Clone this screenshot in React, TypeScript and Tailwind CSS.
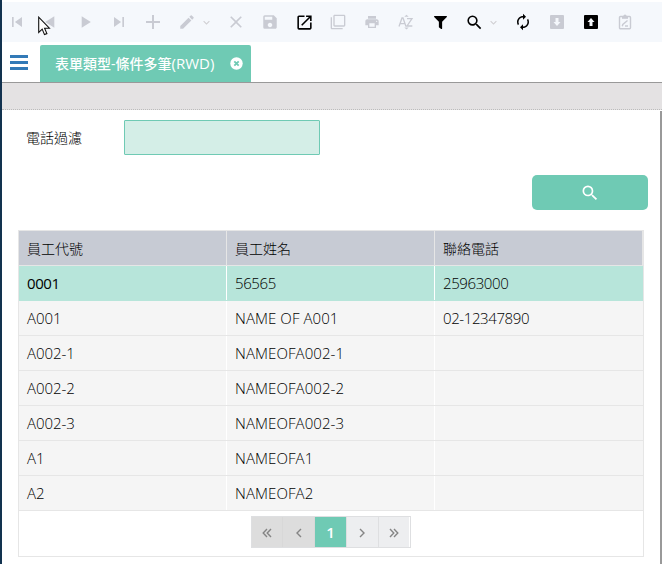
import React from "react";
import {
  MdSkipPrevious,
  MdSkipNext,
  MdPlayArrow,
  MdAdd,
  MdEdit,
  MdClose,
  MdSave,
  MdOpenInNew,
  MdFilterNone,
  MdPrint,
  MdSearch,
  MdAutorenew,
  MdExpandMore,
} from "react-icons/md";
import { FaFilter } from "react-icons/fa";

function Cell({ children, dark }: { children: React.ReactNode; dark?: boolean }) {
  return (
    <span className={"flex h-full w-[34px] shrink-0 items-center justify-center " + (dark ? "text-black" : "text-[#c9cbd3]")}>
      {children}
    </span>
  );
}

function Caret() {
  return (
    <span className="flex h-full w-[15px] shrink-0 items-center text-[#cfcfd3]">
      <MdExpandMore size={13} className="-ml-1 shrink-0" />
    </span>
  );
}

function ArrowBox({ up }: { up?: boolean }) {
  return (
    <svg width="14" height="14" viewBox="0 0 14 14">
      <rect width="14" height="14" rx="1" fill="currentColor" />
      <path d={up ? "M7 3 10.5 7H8.5V11H5.5V7H3.5Z" : "M7 11 3.5 7H5.5V3H8.5V7H10.5Z"} fill="#f5f8fc" />
    </svg>
  );
}

function Toolbar() {
  return (
    <div className="mt-[2px] flex h-10 items-center bg-[#f5f8fc]">
      <div className="-ml-[2px] flex h-10 items-center">
        <Cell><MdSkipPrevious size={20} /></Cell>
        <Cell><MdPlayArrow size={20} className="rotate-180" /></Cell>
        <Cell><MdPlayArrow size={20} /></Cell>
        <Cell><MdSkipNext size={20} /></Cell>
        <Cell><MdAdd size={24} className="shrink-0" /></Cell>
        <Cell><MdEdit size={18} /></Cell>
        <Caret />
        <Cell><MdClose size={20} /></Cell>
        <Cell><MdSave size={18} /></Cell>
        <Cell dark><MdOpenInNew size={19} /></Cell>
        <Cell><MdFilterNone size={16} /></Cell>
        <Cell><MdPrint size={16} /></Cell>
        <Cell>
          <svg width="16" height="16" viewBox="0 0 16 16" fill="none" stroke="currentColor" strokeWidth="1.3">
            <path d="M1 12.500 4 4h1l3 8.500M2.200 9.700h4.700M9 4.600h5L9 12h5.300" />
            <path d="M6.300 2.800 8.500.800l2.200 2zM6.300 13.500l2.200 2 2.200-2z" fill="currentColor" stroke="none" />
          </svg>
        </Cell>
        <Cell dark><FaFilter size={13} /></Cell>
        <Cell dark><MdSearch size={19} /></Cell>
        <Caret />
        <Cell dark><MdAutorenew size={18} /></Cell>
        <Cell><ArrowBox /></Cell>
        <Cell dark><ArrowBox up /></Cell>
        <Cell>
          <svg width="14" height="16" viewBox="0 0 14 16" fill="none" stroke="currentColor" strokeWidth="1.400">
            <rect x="1.500" y="2.500" width="11" height="12.300" rx="1" />
            <path d="M4 2.500h6v2.300H4z" fill="currentColor" stroke="none" />
            <circle cx="7" cy="2" r="1.600" fill="currentColor" stroke="none" />
            <path d="m4.300 12.200.500-1.700L9.500 6.500M7 12h3" />
          </svg>
        </Cell>
      </div>
    </div>
  );
}

function TabBar() {
  return (
    <div className="flex h-[41px] items-end border-b border-[#999999]">
      <div className="flex h-10 w-[38px] flex-col items-start justify-center gap-[3px] pl-2">
        <span className="h-[3px] w-[18px] bg-[#337ab7]" />
        <span className="h-[3px] w-[18px] bg-[#337ab7]" />
        <span className="h-[3px] w-[18px] bg-[#337ab7]" />
      </div>
      <div className="flex h-[37px] w-[211px] items-center rounded-t-[2px] bg-[#6fcab4] pl-[15px] text-sm font-medium text-white">
        <span className="w-[162px] whitespace-nowrap">表單類型-條件多筆<span className="text-[15px]">(RWD)</span></span>
        <svg className="ml-[13px]" width="13" height="13" viewBox="0 0 13 13">
          <circle cx="6.500" cy="6.500" r="6.200" fill="white" />
          <path d="m4.300 4.300 4.400 4.400m0-4.400L4.300 8.700" stroke="#6fcab4" strokeWidth="1.800" />
        </svg>
      </div>
    </div>
  );
}

const rows = [
  ["0001", "56565", "25963000"],
  ["A001", "NAME OF A001", "02-12347890"],
  ["A002-1", "NAMEOFA002-1", ""],
  ["A002-2", "NAMEOFA002-2", ""],
  ["A002-3", "NAMEOFA002-3", ""],
  ["A1", "NAMEOFA1", ""],
  ["A2", "NAMEOFA2", ""],
];

function tracking(text: string) {
  if (text.startsWith("NAME")) return "tracking-[0.080px] ";
  if (text.startsWith("A")) return "tracking-[-0.050px] ";
  return "tracking-[-0.400px] ";
}

function Grid() {
  return (
    <div className="ml-4 mt-5 h-[327px] w-[626px] border border-[#e6e6e6]">
      <div className="grid h-[35px] grid-cols-[208px_208px_208px] border-b border-[#e6e6e6] bg-[#c7cbd4] text-sm font-light text-black">
        {["員工代號", "員工姓名", "聯絡電話"].map((h) => (
          <div key={h} className="flex items-center border-r border-[#e6e6e6] pl-2 pt-px">{h}</div>
        ))}
      </div>
      {rows.map((r, i) => (
        <div
          key={r[0]}
          className={
            "grid h-[35px] grid-cols-[208px_208px_208px] border-b text-[15px] text-black " +
            (i === 0 ? "border-[#b7e5da] bg-[#b7e5da]" : "border-[#e6e6e6] bg-[#f5f5f5]")
          }
        >
          {r.map((c, j) => (
            <div
              key={j}
              className={
                "flex items-center whitespace-nowrap pl-2 pt-px " +
                tracking(c) +
                (j < 2 ? "border-r border-white " : "") +
                (i === 0 && j === 0 ? "font-medium" : "font-[350]")
              }
            >
              {c}
            </div>
          ))}
        </div>
      ))}
      <div className="flex h-[45px] justify-center pt-[5px]">
        <Pager />
      </div>
    </div>
  );
}

function Chevron({ double, right }: { double?: boolean; right?: boolean }) {
  return (
    <svg width="10" height="10" viewBox="0 0 10 10" className={"mt-px " + (right ? "rotate-180" : "")} fill="none" stroke="#858585" strokeWidth="1.400">
      {double ? <path d="M5 1 1.200 5 5 9M9 1 5.200 5 9 9" /> : <path d="M7 1 3 5l4 4" />}
    </svg>
  );
}

function Pager() {
  const off = "flex w-8 items-center justify-center border-r border-[#d8d8d8] bg-[#dddddd]";
  const on = "flex w-8 items-center justify-center border-l border-[#dedfe1] bg-[#edeef0]";
  return (
    <div className="-ml-px flex h-8 w-40 border border-[#dedfe1]">
      <span className={off}><Chevron double /></span>
      <span className={off}><Chevron /></span>
      <span className="flex w-[31px] items-center justify-center bg-[#6fcab4] text-[15px] font-semibold text-white">1</span>
      <span className={on}><Chevron right /></span>
      <span className={on}><Chevron double right /></span>
    </div>
  );
}

export default function App() {
  return (
    <div className="relative flex h-[564px] w-[662px] overflow-hidden bg-white font-['Open_Sans','Noto_Sans_CJK_TC',sans-serif]">
      <div className="w-[2px] shrink-0 bg-[#12324f]" />
      <div className="min-w-0 flex-1">
        <Toolbar />
        <TabBar />
        <div className="h-[27px] border-b border-dotted border-[#bcbcbc] bg-[#e4e2e3]" />
        <div className="flex">
          <div className="min-w-0 flex-1">
            <div className="flex h-[45px] items-end">
              <span className="flex h-[35px] w-[122px] items-center pl-6 pt-px text-sm font-light text-black">電話過濾</span>
              <span className="h-[35px] w-[196px] rounded-[1px] border border-[#6fcab4] bg-[#d4eee7]" />
            </div>
            <div className="mt-5 flex justify-end pr-3">
              <span className="flex h-[35px] w-[116px] items-center justify-center rounded-[5px] bg-[#6fcab4] text-white">
                <MdSearch size={20} />
              </span>
            </div>
            <Grid />
          </div>
          <div className="mt-px h-[453px] w-[2px] bg-[#999]" />
        </div>
      </div>
      <svg className="absolute left-[38px] top-[16px]" width="13" height="21" viewBox="0 0 13 21">
        <path d="M.700 1.200v15.200l3.500-3.300 2.300 5.500 2.400-1-2.300-5.400h4.800z" fill="white" stroke="#111" strokeWidth="1.100" />
      </svg>
    </div>
  );
}
